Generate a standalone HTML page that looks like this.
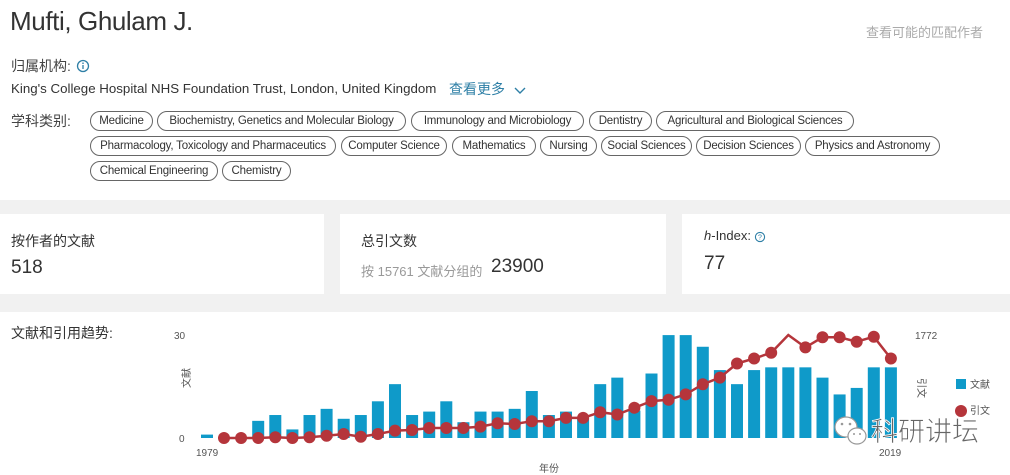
<!DOCTYPE html>
<html><head><meta charset="utf-8"><style>
*{margin:0;padding:0;box-sizing:border-box}
body{width:1010px;height:475px;overflow:hidden;background:#fff;font-family:"Liberation Sans","Noto Sans CJK SC",sans-serif;color:#333;position:relative}
.a{position:absolute;white-space:nowrap}
.tag{position:absolute;height:20px;border:1px solid #666;border-radius:10px;font-size:11.5px;line-height:18px;text-align:center;color:#333;letter-spacing:-0.2px}
.band{position:absolute;left:0;top:200px;width:1010px;height:112px;background:#f1f1f1}
.card{position:absolute;background:#fff;top:214px;height:80px}
</style></head><body>
<div class="a" style="left:10px;top:6px;font-size:26px;color:#333;letter-spacing:-0.4px">Mufti, Ghulam J.</div>
<div class="a" style="left:866px;top:22px;font-size:13px;color:#aaa">查看可能的匹配作者</div>
<div class="a" style="left:11px;top:56px;font-size:14px;color:#444">归属机构:</div>
<svg class="a" style="left:76px;top:59px" width="14" height="14"><circle cx="7" cy="7" r="5.5" fill="none" stroke="#2e7fa6" stroke-width="1.3"/><line x1="7" y1="6" x2="7" y2="10" stroke="#2e7fa6" stroke-width="1.3"/><circle cx="7" cy="4.2" r="0.8" fill="#2e7fa6"/></svg>
<div class="a" style="left:11px;top:81px;font-size:13.3px;color:#333">King's College Hospital NHS Foundation Trust, London, United Kingdom</div>
<div class="a" style="left:449px;top:79px;font-size:14px;color:#2e7fa6">查看更多</div>
<svg class="a" style="left:513px;top:86px" width="14" height="10"><path d="M2 2 L7 7 L12 2" fill="none" stroke="#2e7fa6" stroke-width="1.4"/></svg>
<div class="a" style="left:11px;top:111px;font-size:14px;color:#444">学科类别:</div>
<div class="tag" style="left:90px;top:111px;width:63px">Medicine</div>
<div class="tag" style="left:157px;top:111px;width:249px">Biochemistry, Genetics and Molecular Biology</div>
<div class="tag" style="left:411px;top:111px;width:173px">Immunology and Microbiology</div>
<div class="tag" style="left:589px;top:111px;width:63px">Dentistry</div>
<div class="tag" style="left:656px;top:111px;width:198px">Agricultural and Biological Sciences</div>
<div class="tag" style="left:90px;top:136px;width:246px">Pharmacology, Toxicology and Pharmaceutics</div>
<div class="tag" style="left:341px;top:136px;width:106px">Computer Science</div>
<div class="tag" style="left:452px;top:136px;width:84px">Mathematics</div>
<div class="tag" style="left:540px;top:136px;width:57px">Nursing</div>
<div class="tag" style="left:601px;top:136px;width:91px">Social Sciences</div>
<div class="tag" style="left:696px;top:136px;width:105px">Decision Sciences</div>
<div class="tag" style="left:805px;top:136px;width:135px">Physics and Astronomy</div>
<div class="tag" style="left:90px;top:161px;width:128px">Chemical Engineering</div>
<div class="tag" style="left:222px;top:161px;width:69px">Chemistry</div>
<div class="band"></div>
<div class="card" style="left:0;width:324px"></div>
<div class="card" style="left:340px;width:326px"></div>
<div class="card" style="left:682px;width:328px"></div>
<div class="a" style="left:11px;top:231px;font-size:14px;color:#333">按作者的文献</div>
<div class="a" style="left:11px;top:257px;font-size:19px;color:#333">518</div>
<div class="a" style="left:361px;top:231px;font-size:14px;color:#333">总引文数</div>
<div class="a" style="left:361px;top:261px;font-size:13px;color:#999">按 15761 文献分组的</div>
<div class="a" style="left:491px;top:256px;font-size:19px;color:#333">23900</div>
<div class="a" style="left:704px;top:228px;font-size:13px;color:#333"><i>h</i>-Index:</div>
<svg class="a" style="left:754px;top:231px" width="12" height="12"><circle cx="6" cy="6" r="4.6" fill="none" stroke="#2e7fa6" stroke-width="1.1"/><text x="6" y="8.5" font-size="7" text-anchor="middle" fill="#2e7fa6" font-family="Liberation Sans">?</text></svg>
<div class="a" style="left:704px;top:253px;font-size:19px;color:#333">77</div>
<div class="a" style="left:11px;top:323px;font-size:14px;color:#333">文献和引用趋势:</div>
<svg id="ch" class="a" style="left:0;top:0" width="1010" height="475"></svg>
<script>
var b=[0,0,5,6.7,2.5,6.7,8.5,5.6,6.7,10.7,15.7,6.7,7.7,10.7,4.6,7.7,7.7,8.5,13.7,6.7,7.7,6,15.7,17.6,8,18.8,30,30,26.6,19.8,15.7,19.8,20.6,20.6,20.6,17.6,12.7,14.6,20.6,20.6];
var d=[438,438,438,437.3,438,437.3,435.7,434,436.7,434,430.6,430,428,428,428,426.6,423.3,424,421.2,421.2,417.9,417.9,412.2,414.5,407.8,401.1,399.8,394.4,384.3,377.6,363.5,358.5,352.8,335,347.4,337.3,337.3,341.7,336.7,358.5];
var s='<rect x="201" y="434.6" width="12" height="3.4" fill="#0f9ac9"/>';
function X(k){return 224+k*17.1}
for(var k=0;k<40;k++){var h=b[k]*3.43;if(h>0)s+='<rect x="'+(X(k)-6)+'" y="'+(438-h)+'" width="12" height="'+h+'" fill="#0f9ac9"/>';}
var p='';for(k=0;k<40;k++)p+=X(k)+','+d[k]+' ';
s+='<polyline points="'+p+'" fill="none" stroke="#b5353b" stroke-width="2.5"/>';
for(k=0;k<40;k++)if(k!=33)s+='<circle cx="'+X(k)+'" cy="'+d[k]+'" r="6" fill="#b5353b"/>';
var t='font-family="Liberation Sans,Noto Sans CJK SC,sans-serif" font-size="10" fill="#555"';
s+='<text x="174" y="339" '+t+'>30</text><text x="179" y="442" '+t+'>0</text><text x="196" y="456" '+t+'>1979</text><text x="879" y="456" '+t+'>2019</text><text x="539" y="472" '+t+'>年份</text><text x="915" y="339" '+t+'>1772</text>';
s+='<text '+t+' transform="translate(190,388) rotate(-90)">文献</text><text '+t+' transform="translate(918,378) rotate(90)">引文</text>';
s+='<rect x="956" y="379" width="10" height="10" fill="#0f9ac9"/><text x="970" y="388" '+t+'>文献</text><circle cx="961" cy="411" r="6" fill="#b5353b"/><text x="970" y="414" '+t+'>引文</text>';
s+='<ellipse cx="846" cy="427" rx="11" ry="10" fill="#fff" stroke="#999" stroke-width="1.2"/><ellipse cx="857" cy="436" rx="9" ry="8" fill="#fff" stroke="#999" stroke-width="1.2"/><circle cx="842" cy="424" r="1.3" fill="#999"/><circle cx="850" cy="424" r="1.3" fill="#999"/><circle cx="854" cy="434" r="1" fill="#999"/><circle cx="860" cy="434" r="1" fill="#999"/>';
s+='<text x="871" y="441" font-family="Noto Sans CJK SC,sans-serif" font-size="27" fill="#666" stroke="#fff" stroke-width="0.8">科研讲坛</text>';
document.getElementById('ch').innerHTML=s;
</script>
</body></html>
